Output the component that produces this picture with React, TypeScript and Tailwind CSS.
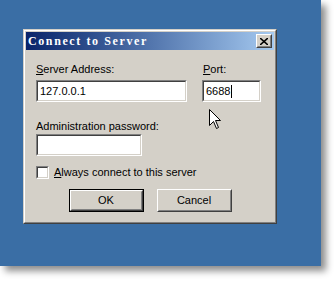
import React from 'react';

const sunken =
  'border border-t-[#808080] border-l-[#808080] border-r-white border-b-white';
const sunkenInner =
  'border border-t-[#404040] border-l-[#404040] border-r-[#d4d0c8] border-b-[#d4d0c8] bg-white';

const Field = ({ width, value, caret }: { width: string; value?: string; caret?: boolean }) => (
  <div className={`${sunken} ${width} h-[22px]`}>
    <div className={`${sunkenInner} h-full flex items-center pl-[2px] text-[11px] leading-none`}>
      {value}
      {caret && <span className="inline-block w-px h-[13px] bg-black ml-[1px]" />}
    </div>
  </div>
);

const Button = ({ label, isDefault }: { label: string; isDefault?: boolean }) => (
  <div className={`w-[75px] h-[23px] ${isDefault ? 'border border-black' : ''}`}>
    <div className="h-full border border-t-white border-l-white border-r-[#404040] border-b-[#404040]">
      <div className="h-full border border-t-[#d4d0c8] border-l-[#d4d0c8] border-r-[#808080] border-b-[#808080] flex items-center justify-center text-[11px]">
        {label}
      </div>
    </div>
  </div>
);

const Cursor = () => (
  <svg className="absolute left-[209px] top-[109px]" width="13" height="21" viewBox="0 0 13 21">
    <path
      d="M0.5 0.5 L0.5 16.5 L4.5 12.5 L7.5 19.5 L9.5 18.5 L6.5 11.5 L11.5 11.5 Z"
      fill="white"
      stroke="black"
      strokeWidth="1"
      strokeLinejoin="miter"
    />
  </svg>
);

export default function App() {
  return (
    <div className="relative w-[336px] h-[282px] bg-white overflow-hidden" style={{ fontFamily: '"Liberation Sans", Arial, sans-serif' }}>
      <div className="w-[321px] h-[266px] bg-[#3a6ea5] pt-[29px] pl-[23px] shadow-[5px_5px_7px_rgba(0,0,0,0.45)]">
        <div className="w-[254px] h-[195px] border border-t-[#d4d0c8] border-l-[#d4d0c8] border-r-[#404040] border-b-[#404040]">
          <div className="h-full border border-t-white border-l-white border-r-[#808080] border-b-[#808080] bg-[#d4d0c8] p-px text-black">
            <div className="h-[18px] flex items-center justify-between pl-[2px] pr-[2px] bg-gradient-to-r from-[#0a246a] to-[#a6caf0]">
              <span className="text-white font-bold text-[12px] tracking-[1.6px]" style={{ fontFamily: '"Liberation Serif", "Times New Roman", serif' }}>
                Connect to Server
              </span>
              <div className="w-[16px] h-[14px] border border-t-white border-l-white border-r-[#404040] border-b-[#404040]">
                <div className="h-full bg-[#d4d0c8] border border-t-[#d4d0c8] border-l-[#d4d0c8] border-r-[#808080] border-b-[#808080] flex items-center justify-center">
                  <svg width="8" height="7" viewBox="0 0 8 7">
                    <path d="M0 0 L8 7 M8 0 L0 7" stroke="black" strokeWidth="1.6" />
                  </svg>
                </div>
              </div>
            </div>

            <div className="px-[10px] pt-[13px]">
              <div className="flex gap-[15px]">
                <div>
                  <div className="text-[11px] leading-[13px] mb-[4px]"><u>S</u>erver Address:</div>
                  <Field width="w-[151px]" value="127.0.0.1" />
                </div>
                <div>
                  <div className="text-[11px] leading-[13px] mb-[4px] pl-px"><u>P</u>ort:</div>
                  <Field width="w-[59px]" value="6688" caret />
                </div>
              </div>

              <div className="text-[11px] leading-[13px] mt-[18px] mb-[1px]">Administration password:</div>
              <Field width="w-[106px]" />

              <div className="flex items-center mt-[10px] gap-[5px]">
                <div className={`${sunken} w-[13px] h-[13px]`}>
                  <div className={`${sunkenInner} h-full`} />
                </div>
                <span className="text-[11px] leading-[13px]"><u>A</u>lways connect to this server</span>
              </div>

              <div className="flex justify-center gap-[13px] mt-[10px]">
                <Button label="OK" isDefault />
                <Button label="Cancel" />
              </div>
            </div>
          </div>
        </div>
      </div>
      <Cursor />
    </div>
  );
}
